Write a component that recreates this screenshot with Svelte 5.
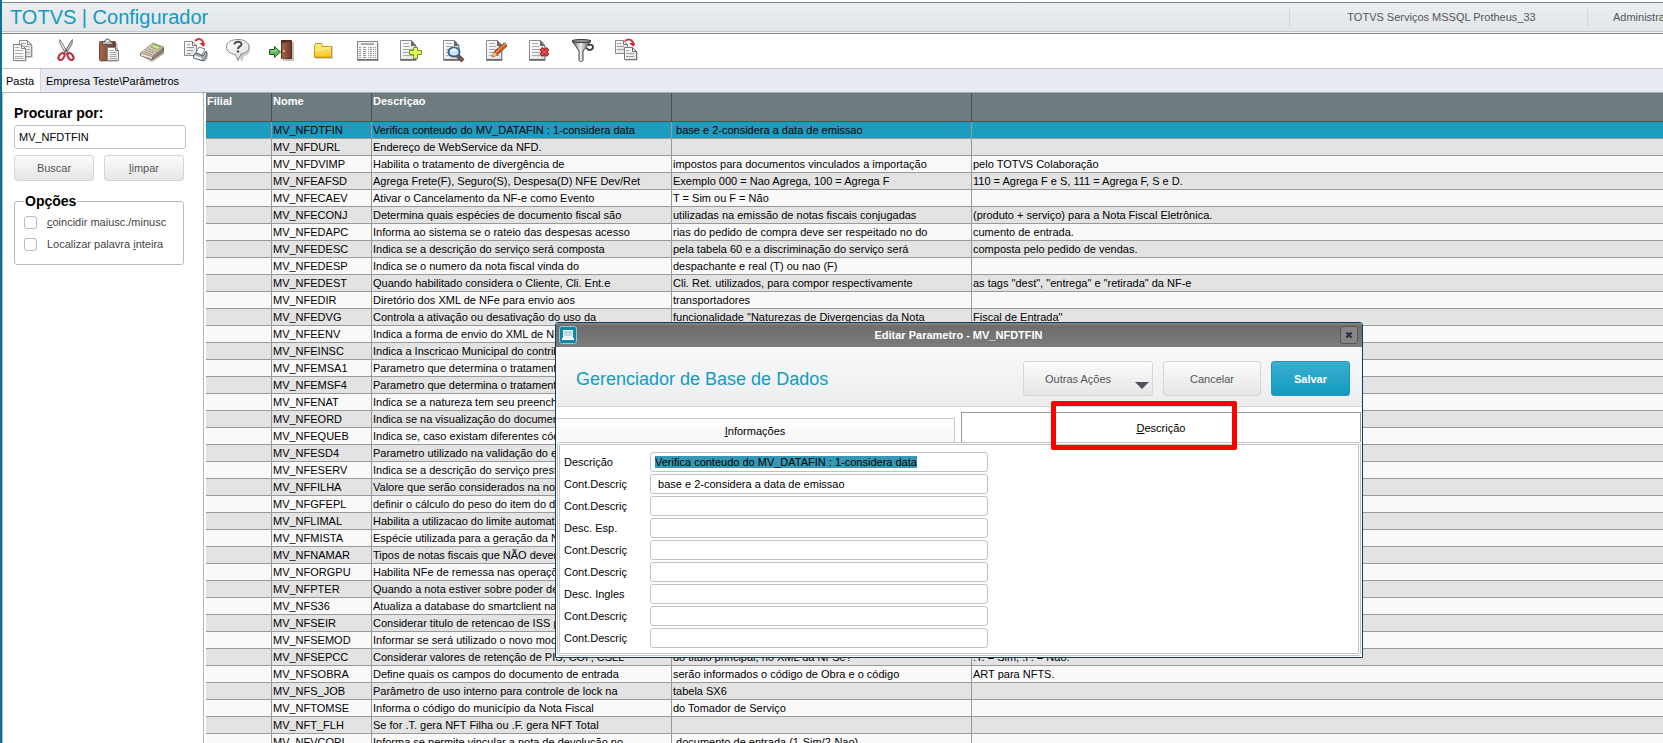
<script>
  const tools = ['Copiar', 'Recortar', 'Colar', 'Calculadora', 'Imprimir', 'Ajuda', 'Sair', 'Abrir', 'Lista', 'Incluir', 'Visualizar', 'Alterar', 'Excluir', 'Filtrar', 'Duplicar'];

  const rows = [
    ['MV_NFDTFIN', 'Verifica conteudo do MV_DATAFIN : 1-considera data', ' base e 2-considera a data de emissao', ''],
    ['MV_NFDURL', 'Endereço de WebService da NFD.', '', ''],
    ['MV_NFDVIMP', 'Habilita o tratamento de divergência de', 'impostos para documentos vinculados a importação', 'pelo TOTVS Colaboração'],
    ['MV_NFEAFSD', 'Agrega Frete(F), Seguro(S), Despesa(D) NFE Dev/Ret', 'Exemplo 000 = Nao Agrega, 100 = Agrega F', '110 = Agrega F e S, 111 = Agrega F, S e D.'],
    ['MV_NFECAEV', 'Ativar o Cancelamento da NF-e como Evento', 'T = Sim ou F = Não', ''],
    ['MV_NFECONJ', 'Determina quais espécies de documento fiscal são', 'utilizadas na emissão de notas fiscais conjugadas', '(produto + serviço) para a Nota Fiscal Eletrônica.'],
    ['MV_NFEDAPC', 'Informa ao sistema se o rateio das despesas acesso', 'rias do pedido de compra deve ser respeitado no do', 'cumento de entrada.'],
    ['MV_NFEDESC', 'Indica se a descrição do serviço será composta', 'pela tabela 60 e a discriminação do serviço será', 'composta pelo pedido de vendas.'],
    ['MV_NFEDESP', 'Indica se o numero da nota fiscal vinda do', 'despachante e real (T) ou nao (F)', ''],
    ['MV_NFEDEST', 'Quando habilitado considera o Cliente, Cli. Ent.e', 'Cli. Ret. utilizados, para compor respectivamente', 'as tags "dest", "entrega" e "retirada" da NF-e'],
    ['MV_NFEDIR', 'Diretório dos XML de NFe para envio aos', 'transportadores', ''],
    ['MV_NFEDVG', 'Controla a ativação ou desativação do uso da', 'funcionalidade "Naturezas de Divergencias da Nota', 'Fiscal de Entrada"'],
    ['MV_NFEENV', 'Indica a forma de envio do XML de NFSe', '', ''],
    ['MV_NFEINSC', 'Indica a Inscricao Municipal do contribuinte', '', ''],
    ['MV_NFEMSA1', 'Parametro que determina o tratamento', '', ''],
    ['MV_NFEMSF4', 'Parametro que determina o tratamento', '', ''],
    ['MV_NFENAT', 'Indica se a natureza tem seu preenchimento', '', ''],
    ['MV_NFEORD', 'Indica se na visualização do documento', '', ''],
    ['MV_NFEQUEB', 'Indica se, caso existam diferentes códigos', '', ''],
    ['MV_NFESD4', 'Parametro utilizado na validação do empenho', '', ''],
    ['MV_NFESERV', 'Indica se a descrição do serviço prestado', '', ''],
    ['MV_NFFILHA', 'Valore que serão considerados na nota', '', ''],
    ['MV_NFGFEPL', 'definir o cálculo do peso do item do documento', '', ''],
    ['MV_NFLIMAL', 'Habilita a utilizacao do limite automatico', '', ''],
    ['MV_NFMISTA', 'Espécie utilizada para a geração da NF', '', ''],
    ['MV_NFNAMAR', 'Tipos de notas fiscais que NÃO devem', '', ''],
    ['MV_NFORGPU', 'Habilita NFe de remessa nas operações', '', ''],
    ['MV_NFPTER', 'Quando a nota estiver sobre poder de', '', ''],
    ['MV_NFS36', 'Atualiza a database do smartclient na', '', ''],
    ['MV_NFSEIR', 'Considerar titulo de retencao de ISS para', '', ''],
    ['MV_NFSEMOD', 'Informar se será utilizado o novo modelo', '', ''],
    ['MV_NFSEPCC', 'Considerar valores de retenção de PIS, COF, CSLL', 'do titulo principal, no XML da NFSe?', '.T. = Sim, .F. = Não.'],
    ['MV_NFSOBRA', 'Define quais os campos do documento de entrada', 'serão informados o código de Obra e o código', 'ART para NFTS.'],
    ['MV_NFS_JOB', 'Parâmetro de uso interno para controle de lock na', 'tabela SX6', ''],
    ['MV_NFTOMSE', 'Informa o código do município da Nota Fiscal', 'do Tomador de Serviço', ''],
    ['MV_NFT_FLH', 'Se for .T. gera NFT Filha ou .F. gera NFT Total', '', ''],
    ['MV_NFVCOPI', 'Informa se permite vincular a nota de devolução no', ' documento de entrada (1-Sim/2-Nao)', '']
  ];

  let fields = $state([
    { label: 'Descrição', value: 'Verifica conteudo do MV_DATAFIN : 1-considera data' },
    { label: 'Cont.Descriç', value: ' base e 2-considera a data de emissao' },
    { label: 'Cont.Descriç', value: '' },
    { label: 'Desc. Esp.', value: '' },
    { label: 'Cont.Descriç', value: '' },
    { label: 'Cont.Descriç', value: '' },
    { label: 'Desc. Ingles', value: '' },
    { label: 'Cont.Descriç', value: '' },
    { label: 'Cont.Descriç', value: '' }
  ]);
  let search = $state('MV_NFDTFIN');

  function selectFirst(node, index) {
    if (index === 0) {
      node.focus();
      node.select();
    }
  }
</script>

{#snippet sheet()}
  <path d="M3 3h12l4 5v15H3z" fill="#8a8a8a" opacity=".45" />
  <path d="M2.500 2.500h11l4 4.500v14.500h-15z" fill="url(#paper)" stroke="#8a8a8a" />
  <path d="M2 22h16" stroke="#444" />
  <path d="M13 2l5 6h-5z" fill="#666" />
  <path d="M5 5.500h6M5 8.500h7M5 11.500h10M5 14.500h10M5 17.500h10" stroke="#aaa" />
{/snippet}

<svg class="defs" aria-hidden="true">
  <defs>
    <linearGradient id="paper" x1="0" y1="0" x2="1" y2="1"><stop offset="0" stop-color="#fff" /><stop offset="1" stop-color="#dedede" /></linearGradient>
    <linearGradient id="gold" x1="0" y1="0" x2="0" y2="1"><stop offset="0" stop-color="#ffef8a" /><stop offset="1" stop-color="#f5c81e" /></linearGradient>
    <linearGradient id="metal"><stop offset="0" stop-color="#555" /><stop offset=".45" stop-color="#eee" /><stop offset="1" stop-color="#444" /></linearGradient>
    <linearGradient id="wood"><stop offset="0" stop-color="#a4674c" /><stop offset="1" stop-color="#6b3a2a" /></linearGradient>
  </defs>
</svg>

<div class="page">
  <header>
    <h1>TOTVS | Configurador</h1>
    <span class="env">TOTVS Serviços MSSQL Protheus_33</span>
    <span class="user">Administrador</span>
  </header>

  <nav class="tools" aria-label="Ferramentas">
    {#each tools as tool, i}
      <button type="button" aria-label={tool}>
        <svg viewBox="0 0 24 24" width="24" height="24" fill="none">
          {#if i === 0}
            <path d="M9 4h9l4 4v12H9z" fill="#999" opacity=".4" />
            <path d="M8.500 2.500h8l4 4v12h-12z" fill="url(#paper)" stroke="#8e8e8e" /><path d="M16.500 2.500v4h4" stroke="#8e8e8e" />
            <path d="M10 5.500h5M10 8.500h8M15 11.500h4M15 14.500h4" stroke="#aaa" />
            <path d="M3 7.500h9l4 4v12H3z" fill="#999" opacity=".4" />
            <path d="M2.500 6.500h8l4 4v12h-12z" fill="#f8f8f8" stroke="#858585" /><path d="M10.500 6.500v4h4" stroke="#858585" />
            <path d="M4 9.500h4M4 12.500h8M4 15.500h8M4 18.500h8M4 20.500h8" stroke="#aaa" />
          {:else if i === 1}
            <path d="M6 15l3-3 4-2 5 5z" fill="#999" opacity=".3" />
            <path d="M5.500 1.500L7 3l7 12-2 1L6 6z" fill="#e2e2e2" stroke="#808080" />
            <path d="M18.500 1.500L17 3l-7 12 2 1 6-10z" fill="#b5b5b5" stroke="#808080" />
            <circle cx="12" cy="12.500" r="1" fill="#444" />
            <ellipse cx="7.500" cy="18.500" rx="2.500" ry="3.800" transform="rotate(35 7.500 18.500)" stroke="#bd2b3c" stroke-width="2" />
            <ellipse cx="16.500" cy="18.500" rx="2.500" ry="3.800" transform="rotate(-35 16.500 18.500)" stroke="#bd2b3c" stroke-width="2" />
          {:else if i === 2}
            <rect x="3" y="5" width="18" height="19" rx="1" fill="#999" opacity=".5" />
            <rect x="2.500" y="3.500" width="16" height="19" rx="1" fill="url(#wood)" stroke="#744432" />
            <path d="M5.500 6.500V4h2c0-4 6-4 6 0h2v2.500z" fill="#b9b9b9" stroke="#5d5d5d" /><circle cx="10.500" cy="3" r="1" fill="#fff" />
            <path d="M10.500 9.500h8l3 3v10h-11z" fill="url(#paper)" stroke="#858585" /><path d="M18.500 9.500v3h3" stroke="#777" />
            <path d="M12.500 12.500h4M12.500 14.500h7M12.500 16.500h7M12.500 18.500h7M12.500 20.500h7" stroke="#aaa" />
          {:else if i === 3}
            <path d="M1 16l13-10 10 5v5l-12 8L1 18z" fill="#777" opacity=".55" />
            <path d="M.5 15.500v2l11.500 4 11.500-8v-4z" fill="#8d8277" stroke="#6e645b" />
            <path d="M.5 15L13 5l10.500 4L12 18.500z" fill="#d5cbbb" stroke="#a0927e" />
            <path d="M1 15.500l11 3.500v2L1 17.500z" fill="#eee6da" />
            <path d="M14 6.500l-3 2.500 6.500 2.500 3.500-2.500z" fill="#c7e889" stroke="#8aa853" />
            <path d="M4.500 14l7 2.500M6.500 12.500l7 2.500M8.500 11l7 2.500" stroke="#8d7b6c" stroke-dasharray="2 1" />
          {:else if i === 4}
            <path d="M1.500 3.500h8l4 4v10h-12z" fill="url(#paper)" stroke="#8a8a8a" /><path d="M9.500 3.500v4h4" stroke="#777" />
            <path d="M4 6.500h3M4 9.500h7M4 12.500h6M4 15.500h4" stroke="#999" />
            <path d="M12 3c4-4 8-1 8 2" stroke="#ca3842" stroke-width="2" /><path d="M16 5h6l-1 4z" fill="#d42b36" />
            <path d="M12 19l10 5 3-4-2-4z" fill="#888" opacity=".5" />
            <path d="M13 15l3-6 6 2-3 6z" fill="#fff" stroke="#708498" />
            <path d="M10.500 17l2.500-2 7 3 3-5 1 2v3l-4 5-9.500-3z" fill="#a5adb3" stroke="#566169" />
            <path d="M12 17.500l7 2.500-1 1.500-7-2z" fill="#fff" />
          {:else if i === 5}
            <path d="M13 3c7 0 11 3 11 8s-4 7-6 7l-2 6-3-5z" fill="#aaa" opacity=".6" />
            <path d="M12 1.500C5 1.500.500 4.500.500 9c0 4 3.500 7 9 7.500l2.500 6 3-6.500C20 15 23 13 23 9c0-4.500-4.500-7.500-11-7.500z" fill="url(#paper)" stroke="#858585" />
            <path d="M8.500 6.500c0-4 7.500-3.500 7 0-.2 2-3.500 2-3.500 4.500" stroke="#4c4c4c" stroke-width="2" /><circle cx="12" cy="13.500" r="1.200" fill="#4c4c4c" />
          {:else if i === 6}
            <path d="M13 4h12v19H14z" fill="#888" opacity=".5" />
            <path d="M12.500 2.500h10v18h-10z" fill="#4f2d22" stroke="#4f2d22" />
            <path d="M13 21V5l9-2v17z" fill="url(#wood)" /><circle cx="15" cy="13" r="1" fill="#f1ca9b" />
            <path d="M.5 11.500h5v-3l6 5.500-6 5.500v-3h-5z" fill="#5cb958" stroke="#235f31" />
            <path d="M2 13h5v-2" stroke="#b3e29a" />
          {:else if i === 7}
            <path d="M3 8h18v13H3z" fill="#999" opacity=".45" />
            <path d="M2.500 8.500l1-3h6l1 3h9v11h-17z" fill="url(#gold)" stroke="#c29b1b" />
            <path d="M3 12h7l2-2h7" stroke="#fff6b0" /><path d="M3 18.500h16" stroke="#e9b91c" />
          {:else if i === 8}
            <path d="M3 5h21v18H3z" fill="#999" opacity=".4" />
            <rect x="2.500" y="3.500" width="20" height="18" fill="#f5f5f5" stroke="#858585" />
            <path d="M6 6h13" stroke="#aaa" stroke-width="2" />
            <path d="M4 9.500h17M4 11.500h17M4 13.500h17M4 15.500h17M4 17.500h17M4 19.500h17" stroke="#999" stroke-dasharray="2 1 4 1" />
            <path d="M7.500 8v13M12.500 8v13M17.500 8v13" stroke="#fff" /><path d="M2 22h21" stroke="#555" />
          {:else if i === 9}
            {@render sheet()}<path d="M15.500 9.500h4v3h4v4h-4v4h-4v-4h-4v-4h4z" fill="#e1ff56" stroke="#73922a" />
          {:else if i === 10}
            {@render sheet()}<path d="M16 17l6 6" stroke="#5f4239" stroke-width="4" /><path d="M16 17l6 6" stroke="#a77c67" stroke-width="1" /><ellipse cx="13" cy="14" rx="5.500" ry="4.500" fill="#cfe9fa" stroke="#36658d" stroke-width="2" /><path d="M10 13c1-2 3-2 5-1" stroke="#fff" stroke-width="2" />
          {:else if i === 11}
            {@render sheet()}<path d="M8 19l2-5L20 5l3 3-10 9z" fill="#d65f2b" stroke="#8f3517" /><path d="M8 19l2-5 3 3z" fill="#f3d17d" /><path d="M19 5l2-1 2 2-1 2z" fill="#b2a37f" /><path d="M12 14l8-7" stroke="#f2a066" />
          {:else if i === 12}
            {@render sheet()}<path d="M14 10.500l7 7M21 10.500l-7 7" stroke="#8d1b21" stroke-width="4" /><path d="M14.500 11l6 6M20.500 11l-6 6" stroke="#f44a4f" stroke-width="2" />
          {:else if i === 13}
            <path d="M18 7c6-2 7 5 1 5l-3-2" stroke="#444" stroke-width="2" />
            <path d="M2 3l7 10v9c0 2 4 2 4 0v-9l8-10z" fill="url(#metal)" stroke="#444" />
            <ellipse cx="11.500" cy="3" rx="9.500" ry="1.500" fill="#999" stroke="#333" />
          {:else}
            <path d="M2.500 2.500h8l4 4v9h-12z" fill="url(#paper)" stroke="#8a8a8a" /><path d="M10.500 2.500v4h4" stroke="#777" /><path d="M4 5.500h4M4 8.500h7M4 11.500h7" stroke="#999" />
            <path d="M12 10h9l4 4v9H12z" fill="#999" opacity=".4" />
            <path d="M11.500 9.500h8l4 4v8h-12z" fill="url(#paper)" stroke="#777" /><path d="M19.500 9.500v4h4" stroke="#666" /><path d="M13 12.500h3M13 15.500h8M13 18.500h8" stroke="#999" />
            <path d="M12 3c4-3 8-1 8 3" stroke="#cf3541" stroke-width="2" /><path d="M16 5h6l-1 4z" fill="#cf2634" />
          {/if}
        </svg>
      </button>
    {/each}
  </nav>

  <div class="crumbs"><span class="folder">Pasta</span><span class="path">Empresa Teste\Parâmetros</span></div>

  <main>
    <aside>
      <label class="heading" for="search">Procurar por:</label>
      <input id="search" class="box" type="text" bind:value={search} />
      <div class="pair">
        <button class="btn" type="button">Buscar</button>
        <button class="btn" type="button"><u>l</u>impar</button>
      </div>
      <fieldset>
        <legend class="heading">Opções</legend>
        <label><input type="checkbox" /><span><u>c</u>oincidir maiusc./minusc</span></label>
        <label><input type="checkbox" /><span>Localizar palavra <u>i</u>nteira</span></label>
      </fieldset>
    </aside>

    <div class="grid">
      <table>
        <colgroup><col class="c1" /><col class="c2" /><col class="c3" /><col class="c3" /><col /></colgroup>
        <thead><tr><th>Filial</th><th>Nome</th><th>Descriçao</th><th></th><th></th></tr></thead>
        <tbody>
          {#each rows as row, i}
            <tr class:selected={i === 0}>
              <td></td>
              {#each row as cell}<td>{cell}</td>{/each}
            </tr>
          {/each}
        </tbody>
      </table>
    </div>
  </main>

  <div class="dialog" role="dialog" aria-labelledby="dialog-title">
    <div class="titlebar">
      <svg viewBox="0 0 18 18" width="18" height="18">
        <rect x=".5" y=".5" width="17" height="17" rx="2" fill="#1686a8" stroke="#8dc6d8" />
        <path d="M4 4h10v8H4z" fill="#e9f4f8" /><path d="M5 5h8v5H5z" fill="#b9d9e4" /><path d="M3 12h12v2H3z" fill="#fff" />
      </svg>
      <strong id="dialog-title">Editar Parametro - MV_NFDTFIN</strong>
      <button class="close" type="button" aria-label="Fechar">
        <svg viewBox="0 0 8 8" width="8" height="8"><path d="M1.500 1.500l5 5M6.500 1.500l-5 5" stroke="#252b42" stroke-width="2" /></svg>
      </button>
    </div>
    <div class="banner">
      <h2>Gerenciador de Base de Dados</h2>
      <button class="btn more" type="button"><span>Outras Ações</span><i></i></button>
      <button class="btn cancel" type="button">Cancelar</button>
      <button class="btn save" type="button">Salvar</button>
    </div>
    <div class="tabs" role="tablist">
      <button role="tab" type="button" aria-selected="false"><span><u>I</u>nformações</span></button>
      <button role="tab" type="button" aria-selected="true" class="active"><span><u>D</u>escrição</span></button>
    </div>
    <div class="panel">
      <form>
        {#each fields as field, i}
          <label for="field-{i}">{field.label}</label>
          <input id="field-{i}" class="box" type="text" bind:value={field.value} use:selectFirst={i} />
        {/each}
      </form>
    </div>
    <div class="mark"></div>
  </div>
</div>

<style>
  :global(body) { margin: 0; overflow: hidden; }
  * { box-sizing: border-box; }
  button, input { font: inherit; color: inherit; margin: 0; }
  .defs { position: absolute; width: 0; height: 0; }
  .page {
    position: relative; display: flex; flex-direction: column; height: 100vh; overflow: hidden;
    border-left: 2px solid #0b7292; background: #fff; color: #000;
    font: 11px/16px "Liberation Sans", Arial, sans-serif;
  }
  header {
    display: flex; align-items: center; flex: none; height: 32px; margin-top: 2px;
    border-top: 1px solid #85868a; border-bottom: 1px solid #85868a;
    background: linear-gradient(#eceff2, #e0e5e9 28px, #c3c7cb 28px, #c3c7cb 29px, #f4f4f4 29px);
    color: #555; white-space: nowrap; overflow: hidden;
  }
  h1, h2 { margin: 0; font-weight: 400; color: #129bc0; }
  h1 { flex: 1; padding: 0 0 2px 8px; font-size: 20px; line-height: 28px; }
  .env, .user { flex: none; padding-bottom: 2px; border-left: 1px solid #d3d9dc; }
  .env { width: 298px; padding-left: 6px; text-align: center; }
  .user { width: 76px; padding-left: 25px; }

  .tools { display: flex; flex: none; height: 35px; border-bottom: 1px solid #c5c8cc; }
  .tools button { flex: none; width: 43px; padding: 0 10px 2px 9px; border: 0; background: none; }
  .tools svg { display: block; overflow: visible; }

  .crumbs { display: flex; flex: none; height: 24px; line-height: 24px; white-space: nowrap; border-bottom: 1px solid #a9abad; }
  .folder { width: 38px; padding-left: 4px; }
  .path { flex: 1; padding-left: 5px; background: #e7eaf2; border-left: 1px solid #d3d5da; }

  main { display: flex; flex: 1; min-height: 0; gap: 2px; }
  aside { flex: none; width: 202px; padding: 12px 17px 0 11px; border: 1px solid #b5b5b5; border-bottom: 0; border-radius: 3px 3px 0 0; margin-top: -1px; }
  .heading { display: block; font-size: 14px; font-weight: 700; line-height: 16px; }
  .box { display: block; width: 100%; border: 1px solid #c2c2c2; border-radius: 3px; background: #fff; outline: 0; padding: 0 4px; }
  .box::selection { background: #3798b5; color: #000; }
  #search { height: 24px; margin-top: 4px; }
  .pair { display: grid; grid-template-columns: 80px 80px; gap: 10px; margin-top: 6px; }
  .btn { height: 26px; padding: 0; border: 1px solid #d6d6d6; border-radius: 3px; background: linear-gradient(#fbfbfb, #e6e6e6); color: #555; }
  fieldset { width: 170px; height: 72px; margin: 12px 0 0; padding: 2px 9px; border: 1px solid #bbb; border-radius: 3px; }
  legend { padding: 0 1px; }
  fieldset label { display: flex; align-items: center; gap: 10px; height: 22px; color: #444; white-space: nowrap; }
  fieldset input { appearance: none; flex: none; width: 13px; height: 13px; border: 1px solid #bbb; border-radius: 3px; background: #fff; }

  .grid { flex: 1; min-width: 0; overflow: hidden; }
  table { width: 100%; table-layout: fixed; border-spacing: 0; }
  .c1 { width: 66px; } .c2 { width: 100px; } .c3 { width: 300px; }
  th, td { overflow: hidden; white-space: pre; text-align: left; border-right: 1px solid #999; border-bottom: 1px solid #999; }
  th:last-child, td:last-child { border-right: 0; }
  th { height: 29px; padding: 0 1px; vertical-align: top; background: #6e7c80; color: #fff; border-color: #4a5052; }
  td { height: 17px; padding: 0 1px; background: #f9f9f9; }
  tr:nth-child(even) td { background: #e3e3e3; }
  tr.selected td { background: #1c9cbe; }

  .dialog {
    position: absolute; left: 553px; top: 322px; width: 808px;
    border: 1px solid #123e5c; border-radius: 3px 3px 0 0; background: #fff; overflow: hidden;
  }
  .titlebar { display: flex; align-items: center; height: 24px; padding: 0 4px 0 3px; background: linear-gradient(#898989, #6d6d6d 3px, #7c7c7c); color: #fff; }
  .titlebar strong { flex: 1; text-align: center; }
  .close { display: grid; place-items: center; width: 18px; height: 18px; padding: 0; border: 1px solid #565656; border-radius: 3px; background: #868686; }
  .banner { display: flex; align-items: center; height: 60px; padding: 4px 12px 0 20px; border-bottom: 1px solid #d6d6d6; background: linear-gradient(#f8f9fa, #ecedef); }
  h2 { flex: 1; font-size: 18px; line-height: 24px; }
  .banner .btn { height: 35px; }
  .more { display: flex; align-items: center; justify-content: space-between; width: 130px; margin-right: 10px; }
  .more span { padding-left: 21px; }
  .more i { width: 0; border: 7px solid transparent; border-top-color: #4b535e; border-bottom: 0; margin: 13px 3px 0 0; }
  .cancel { width: 98px; margin-right: 10px; }
  .banner .save { width: 79px; border-color: #2196b6; background: linear-gradient(#3bafcf, #129abf); color: #fff; font-weight: 700; }
  .tabs { display: flex; align-items: flex-end; gap: 6px; height: 35px; padding-right: 1px; }
  .tabs button { flex: 1; height: 24px; padding: 0; border: 1px solid #c9c9c9; border-width: 1px 1px 0 0; background: linear-gradient(#fff, #f6f6f6); }
  .tabs .active { height: 30px; border-color: #999; border-left-width: 1px; background: #fff; }
  .panel { margin: 0 1px 1px; padding: 7px 6px 5px; border: 3px double #c2c2c2; border-radius: 3px; }
  form { display: grid; grid-template-columns: 76px 338px; gap: 2px 10px; margin-left: -3px; padding-left: 1px; }
  form label { line-height: 20px; white-space: nowrap; }
  form .box { height: 20px; }
  .mark { position: absolute; left: 495px; top: 78px; width: 186px; height: 49px; border: 5px solid #f00; border-radius: 2px; pointer-events: none; }
</style>
